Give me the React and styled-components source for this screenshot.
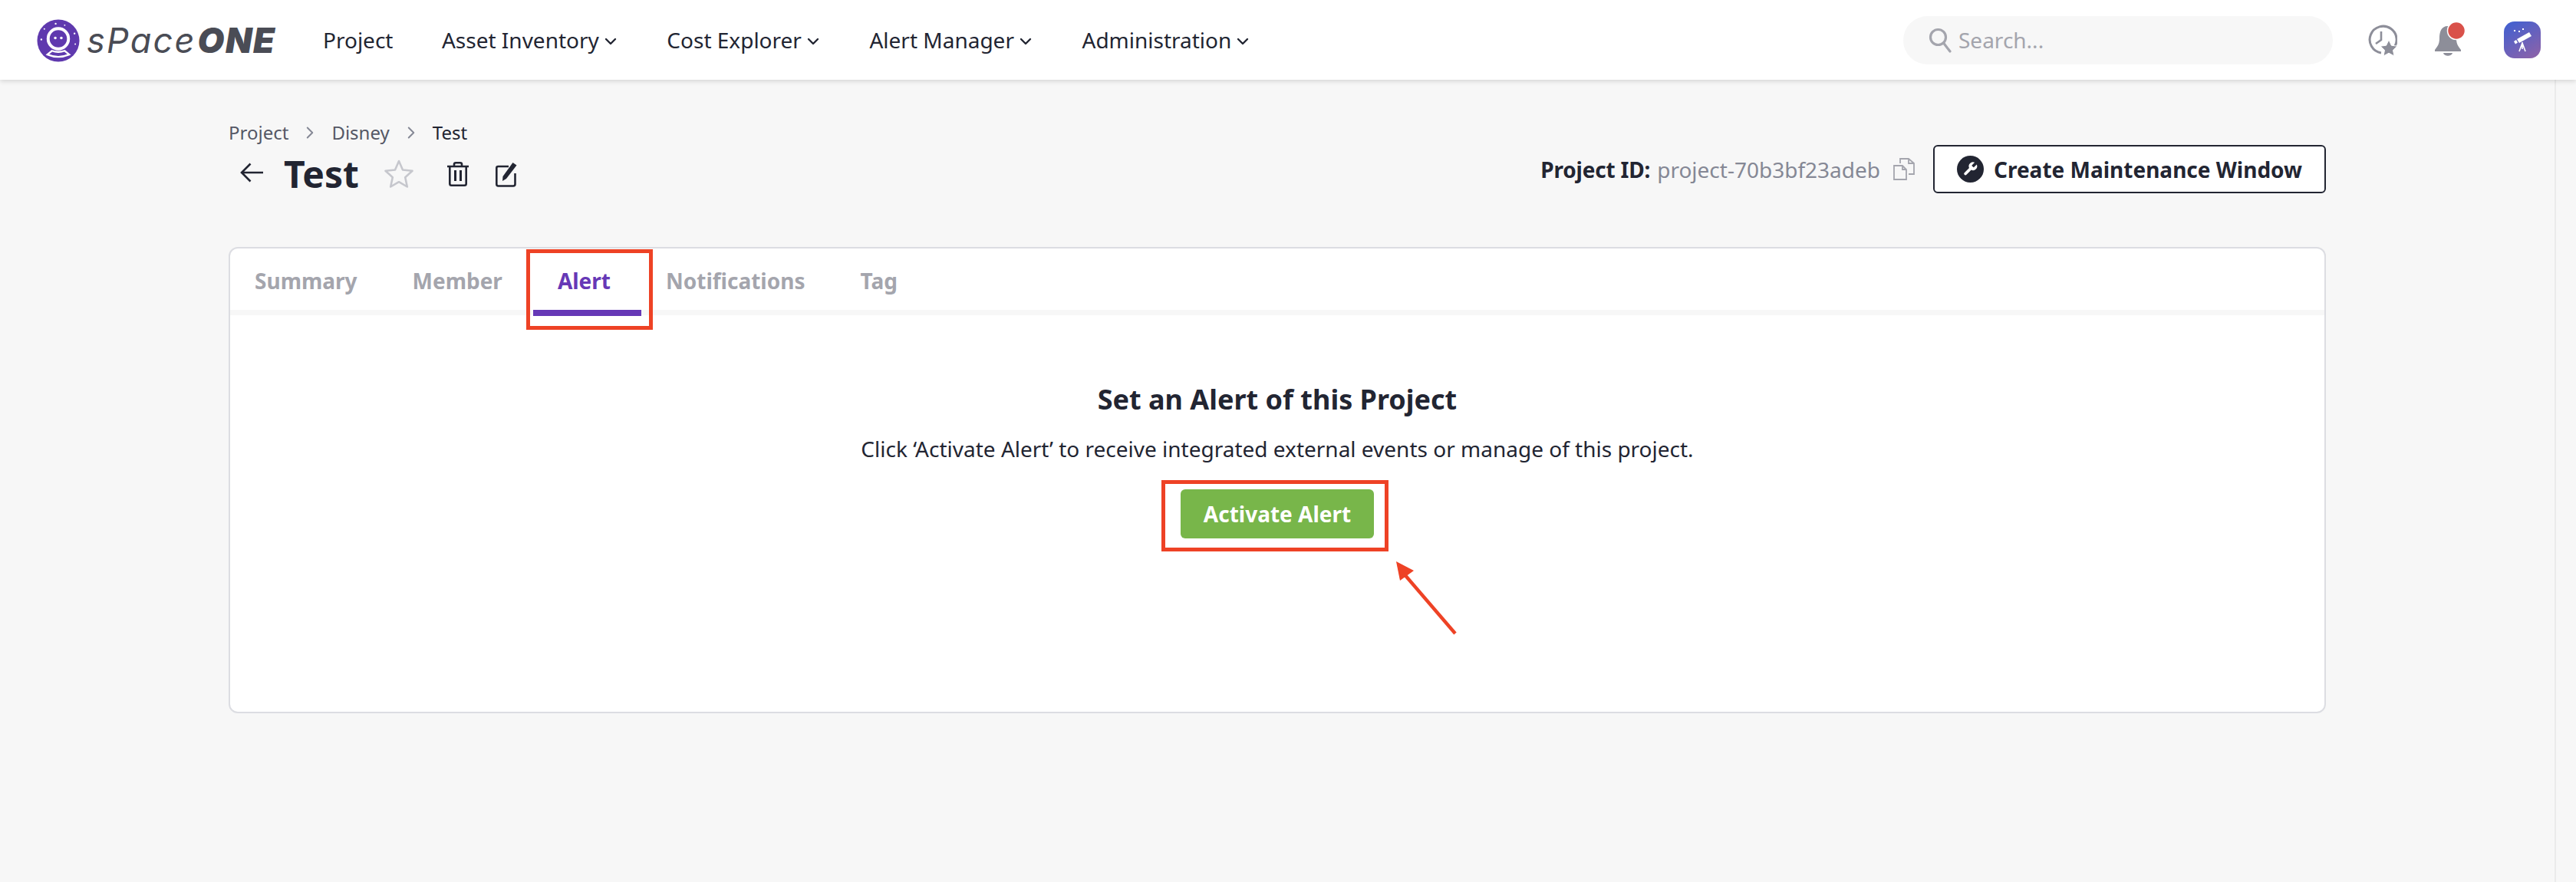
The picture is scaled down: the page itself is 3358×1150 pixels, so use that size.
import React from 'react';
import styled, { createGlobalStyle } from 'styled-components';
import { ChevronDown, ChevronRight } from 'lucide-react';

const GlobalStyle = createGlobalStyle`
  html, body {
    margin: 0;
    padding: 0;
    background: #f7f7f7;
    color: #222532;
    font-family: "Noto Sans", "Open Sans", sans-serif;
  }
`

const Page = styled.div`
  min-height: 1150px;
  background: #f7f7f7;
`

const Header = styled.header`
  position: relative;
  height: 104px;
  box-sizing: border-box;
  background: #fff;
  box-shadow: 0 2px 6px rgba(0, 0, 0, 0.14);
  display: flex;
  align-items: center;
  padding: 0 46px 0 48px;
`

const Logo = styled.div`
  display: flex;
  align-items: center;
  gap: 9px;
  width: 373px;
  flex: none;
  svg { margin-top: 2px; }
`

const Wordmark = styled.span`
  font-family: "Inter", sans-serif;
  font-style: italic;
  font-size: 45px;
  font-weight: 400;
  letter-spacing: 2.2px;
  color: #4a4c55;
  line-height: 1;
  b {
    font-weight: 900;
    letter-spacing: 1.5px;
    margin-left: 2px;
  }
`

const Nav = styled.nav`
  display: flex;
  align-items: center;
  gap: 61.5px;
`

const NavItem = styled.div`
  display: flex;
  align-items: center;
  gap: 3px;
  font-size: 28px;
  color: #222532;
  margin-right: ${p => (p.$plain ? 2 : 0)}px;
  svg { margin-top: 4px; }
`

const Search = styled.div`
  margin-left: auto;
  width: 560px;
  height: 63px;
  border-radius: 32px;
  background: #f7f7f7;
  display: flex;
  align-items: center;
  gap: 6px;
  padding-left: 32px;
  box-sizing: border-box;
  font-size: 28px;
  color: #a4a5ad;
`

const HeaderIcons = styled.div`
  display: flex;
  align-items: center;
  margin-left: 44px;
`

const IconSlot = styled.div`
  display: flex;
  margin-left: ${p => p.$gap || 0}px;
`

const Workspace = styled.div`
  width: 3332px;
  min-height: 1046px;
  box-sizing: border-box;
  border-right: 2px solid #ebebeb;
  padding-left: 298px;
`

const Content = styled.main`
  width: 2734px;
  padding-top: 52px;
`

const Breadcrumb = styled.div`
  display: flex;
  align-items: center;
  font-size: 24px;
  line-height: 33px;
`

const Crumb = styled.span`
  color: ${p => (p.$current ? '#222532' : '#555866')};
`

const CrumbSep = styled.span`
  display: flex;
  margin: 0 15px;
  color: #858895;
`

const TitleRow = styled.div`
  display: flex;
  align-items: center;
  justify-content: space-between;
  margin-top: 3px;
  height: 70px;
`

const TitleLeft = styled.div`
  display: flex;
  align-items: center;
  padding-left: 15px;
`

const BackArrow = styled.svg`
  margin-top: -4px;
`

const Title = styled.h1`
  font-size: 48px;
  line-height: 66px;
  font-weight: 700;
  margin: 0 32px 0 27px;
`

const TitleIcon = styled.span`
  display: flex;
  margin-right: ${p => p.$right || 0}px;
`

const TitleRight = styled.div`
  display: flex;
  align-items: center;
  align-self: flex-start;
  margin-top: -3px;
`

const ProjectId = styled.div`
  font-size: 28px;
  color: #858895;
  b { color: #222532; margin-right: 9px; letter-spacing: -0.2px; }
`

const CopyIcon = styled.span`
  display: flex;
  margin: 0 23px 0 17px;
`

const OutlineButton = styled.button`
  height: 63px;
  width: 512px;
  box-sizing: border-box;
  background: #fff;
  border: 2.5px solid #222532;
  border-radius: 6px;
  display: flex;
  align-items: center;
  justify-content: center;
  gap: 13px;
  font: 700 28px "Noto Sans", sans-serif;
  color: #222532;
`

const Card = styled.section`
  margin-top: 60px;
  height: 608px;
  box-sizing: border-box;
  background: #fff;
  border: 2px solid #dcdde2;
  border-radius: 12px;
  position: relative;
`

const TabBar = styled.div`
  display: flex;
  height: 80px;
  border-bottom: 7px solid #f7f7f7;
`

const Tab = styled.div`
  position: relative;
  box-sizing: border-box;
  height: 88px;
  padding: 0 40px 0 32px;
  font-size: 28px;
  font-weight: 700;
  line-height: 84px;
  color: ${p => (p.$active ? '#6638b6' : '#a4a5ad')};
  border-bottom: 8px solid ${p => (p.$active ? '#6638b6' : 'transparent')};
`

const Callout = styled.span`
  position: absolute;
  border: 5px solid #ee4225;
  box-sizing: border-box;
  pointer-events: none;
`

const TabCallout = styled(Callout)`
  left: -9px;
  right: -15px;
  top: 1px;
  height: 105px;
`

const Body = styled.div`
  display: flex;
  flex-direction: column;
  align-items: center;
  padding-top: 85px;
`

const BodyTitle = styled.h2`
  margin: 0;
  font-size: 36px;
  line-height: 50px;
  font-weight: 700;
`

const BodyText = styled.p`
  margin: 20px 0 0;
  font-size: 28px;
  line-height: 38px;
`

const ActivateWrap = styled.div`
  position: relative;
  margin-top: 34px;
`

const ActivateButton = styled.button`
  width: 252px;
  height: 64px;
  border: 0;
  border-radius: 6px;
  background: #78b64a;
  color: #fff;
  font: 700 28px "Noto Sans", sans-serif;
`

const ButtonCallout = styled(Callout)`
  left: -25px;
  right: -19px;
  top: -12px;
  bottom: -17px;
`

const PointerArrow = styled.svg`
  position: absolute;
  left: 277px;
  top: 92px;
`

const LogoMark = () => (
  <svg width="56" height="56" viewBox="0 0 57 57">
    <circle cx="28.5" cy="28.5" r="28" fill="#5f39ae" />
    <circle cx="28.5" cy="26" r="13.5" fill="#5f39ae" stroke="#fff" strokeWidth="4" />
    <circle cx="24.5" cy="25" r="1.8" fill="#fff" />
    <circle cx="32.5" cy="25" r="1.8" fill="#fff" />
    <path d="M14 47 L20 42 Q28.5 45 37 42 L43 47 Q28.5 53 14 47Z" fill="none" stroke="#fff" strokeWidth="2.4" />
    <g fill="#fff">
      <circle cx="25" cy="6" r="1.2" />
      <circle cx="37" cy="8" r="1" />
      <circle cx="10" cy="13" r="1" />
      <circle cx="6" cy="27" r="1.2" />
      <circle cx="50" cy="19" r="1.2" />
      <circle cx="51" cy="33" r="1" />
    </g>
  </svg>
)

const SearchIcon = () => (
  <svg width="34" height="34" viewBox="0 0 34 34" fill="none" stroke="#a4a5ad" strokeWidth="3.2">
    <circle cx="13.5" cy="13.5" r="10" />
    <path d="M20.5 21 L29 32" strokeLinecap="round" />
  </svg>
)

const RecentIcon = () => (
  <svg width="40" height="44" viewBox="0 0 40 44">
    <path d="M31 33 A17.5 17.5 0 1 0 17 37" fill="none" stroke="#8d8e99" strokeWidth="3" transform="translate(2 2)" />
    <path d="M19 11 V22 L12 27" fill="none" stroke="#8d8e99" strokeWidth="2.6" />
    <path d="M29 22 L32.4 29.2 L40 30.2 L34.5 35.4 L36 43 L29 39.2 L22 43 L23.5 35.4 L18 30.2 L25.6 29.2Z" fill="#8d8e99" stroke="#fff" strokeWidth="1" />
  </svg>
)

const BellIcon = () => (
  <svg width="46" height="48" viewBox="0 0 46 48">
    <path d="M18 6 C9 6 7 14 7 22 C7 30 4 33 1 37 V39 H35 V37 C32 33 29 30 29 22 C29 14 27 6 18 6Z" fill="#8d8e99" />
    <path d="M12 41 H24 C23 46 13 46 12 41Z" fill="#8d8e99" />
    <circle cx="29" cy="12" r="11.5" fill="#d9514a" stroke="#fff" strokeWidth="1.5" />
  </svg>
)

const AvatarIcon = () => (
  <svg width="48" height="48" viewBox="0 0 48 48">
    <defs>
      <linearGradient id="avatarFill" x1="0.2" y1="0" x2="0.8" y2="1">
        <stop offset="0" stopColor="#4460cf" />
        <stop offset="1" stopColor="#8a62aa" />
      </linearGradient>
    </defs>
    <rect width="48" height="48" rx="14" fill="url(#avatarFill)" />
    <path d="M17 23 L33 14 L36 19 L20 28Z M13 26 L16 24 L18 27.5 L15 29.5Z" fill="#fff" />
    <path d="M24 27 V36 M24 28 L20 39 M24 28 L28 39" stroke="#fff" strokeWidth="1.6" fill="none" />
    <g fill="#fff">
      <rect x="13" y="11" width="2" height="2" />
      <rect x="19" y="12" width="2" height="2" />
      <rect x="24" y="9" width="2" height="2" />
    </g>
  </svg>
)

const StarOutline = () => (
  <svg width="40" height="40" viewBox="0 0 40 40">
    <path d="M20 3 L25 14.5 L37.5 15.8 L28.2 24.2 L30.8 36.5 L20 30.2 L9.2 36.5 L11.8 24.2 L2.5 15.8 L15 14.5Z" fill="none" stroke="#c6c7cd" strokeWidth="2.6" strokeLinejoin="round" />
  </svg>
)

const TrashIcon = () => (
  <svg width="28" height="32" viewBox="0 0 28 32" fill="none" stroke="#222532" strokeWidth="2.6">
    <path d="M0 6 H28 M9 6 V3 Q9 1.3 11 1.3 H17 Q19 1.3 19 3 V6" />
    <path d="M3.3 6 V28.5 Q3.3 30.7 5.5 30.7 H22.5 Q24.7 30.7 24.7 28.5 V6" />
    <path d="M10.5 11 V25 M17.5 11 V25" strokeWidth="3" />
  </svg>
)

const EditIcon = () => (
  <svg width="28" height="33" viewBox="0 0 28 33">
    <path d="M17 6 H3.5 Q1.3 6 1.3 8 V29 Q1.3 31.5 3.5 31.5 H23 Q25.5 31.5 25.5 29 V15" fill="none" stroke="#222532" strokeWidth="2.6" />
    <path d="M22.5 1 L27.5 4.5 L14 22 L9 25 L9.5 19Z" fill="#222532" />
  </svg>
)

const CopyGlyph = () => (
  <svg width="29" height="29" viewBox="0 0 29 29" fill="none" stroke="#a4a5ad" strokeWidth="1.8">
    <path d="M1 10 H12 L17 15 V28 H1Z M12 10 V15 H17" />
    <path d="M9 7 V1 H20 L27 7 V21 H20 M20 1 V7 H27" />
  </svg>
)

const WrenchBadge = () => (
  <svg width="35" height="35" viewBox="0 0 35 35">
    <circle cx="17.5" cy="17.5" r="17.5" fill="#222532" />
    <g transform="translate(6.5 6.5) scale(0.9)">
      <path d="M14.7 6.3a1 1 0 0 0 0 1.4l1.6 1.6a1 1 0 0 0 1.4 0l3.77-3.77a6 6 0 0 1-7.94 7.94l-6.91 6.91a2.12 2.12 0 0 1-3-3l6.91-6.91a6 6 0 0 1 7.94-7.94l-3.76 3.76z" fill="#fff" />
    </g>
  </svg>
)

const navItems = [
  { label: 'Project' },
  { label: 'Asset Inventory', menu: true },
  { label: 'Cost Explorer', menu: true },
  { label: 'Alert Manager', menu: true },
  { label: 'Administration', menu: true },
]

const tabs = ['Summary', 'Member', 'Alert', 'Notifications', 'Tag']

const App = () => (
  <Page>
    <GlobalStyle />
    <Header>
      <Logo>
        <LogoMark />
        <Wordmark>sPace<b>ONE</b></Wordmark>
      </Logo>
      <Nav>
        {navItems.map(item => (
          <NavItem key={item.label} $plain={!item.menu}>
            {item.label}
            {item.menu && <ChevronDown size={24} strokeWidth={2.4} />}
          </NavItem>
        ))}
      </Nav>
      <Search>
        <SearchIcon />
        Search...
      </Search>
      <HeaderIcons>
        <RecentIcon />
        <IconSlot $gap={48}><BellIcon /></IconSlot>
        <IconSlot $gap={45}><AvatarIcon /></IconSlot>
      </HeaderIcons>
    </Header>
    <Workspace>
      <Content>
        <Breadcrumb>
          <Crumb>Project</Crumb>
          <CrumbSep><ChevronRight size={26} strokeWidth={1.8} /></CrumbSep>
          <Crumb>Disney</Crumb>
          <CrumbSep><ChevronRight size={26} strokeWidth={1.8} /></CrumbSep>
          <Crumb $current>Test</Crumb>
        </Breadcrumb>
        <TitleRow>
          <TitleLeft>
            <BackArrow width="30" height="26" viewBox="0 0 30 26" fill="none" stroke="#222532" strokeWidth="2.6">
              <path d="M30 13 H2 M13.5 1.5 L2 13 L13.5 24.5" />
            </BackArrow>
            <Title>Test</Title>
            <TitleIcon $right={43}><StarOutline /></TitleIcon>
            <TitleIcon $right={35}><TrashIcon /></TitleIcon>
            <TitleIcon><EditIcon /></TitleIcon>
          </TitleLeft>
          <TitleRight>
            <ProjectId><b>Project ID:</b>project-70b3bf23adeb</ProjectId>
            <CopyIcon><CopyGlyph /></CopyIcon>
            <OutlineButton><WrenchBadge />Create Maintenance Window</OutlineButton>
          </TitleRight>
        </TitleRow>
        <Card>
          <TabBar>
            {tabs.map(tab => (
              <Tab key={tab} $active={tab === 'Alert'}>
                {tab}
                {tab === 'Alert' && <TabCallout />}
              </Tab>
            ))}
          </TabBar>
          <Body>
            <BodyTitle>Set an Alert of this Project</BodyTitle>
            <BodyText>Click ‘Activate Alert’ to receive integrated external events or manage of this project.</BodyText>
            <ActivateWrap>
              <ActivateButton>Activate Alert</ActivateButton>
              <ButtonCallout />
              <PointerArrow width="90" height="110" viewBox="0 0 90 110">
                <path d="M81 96 L14 18" stroke="#ee4225" strokeWidth="4.5" fill="none" />
                <path d="M4 2 L27 14 L9 27Z" fill="#ee4225" />
              </PointerArrow>
            </ActivateWrap>
          </Body>
        </Card>
      </Content>
    </Workspace>
  </Page>
);

export default App;
